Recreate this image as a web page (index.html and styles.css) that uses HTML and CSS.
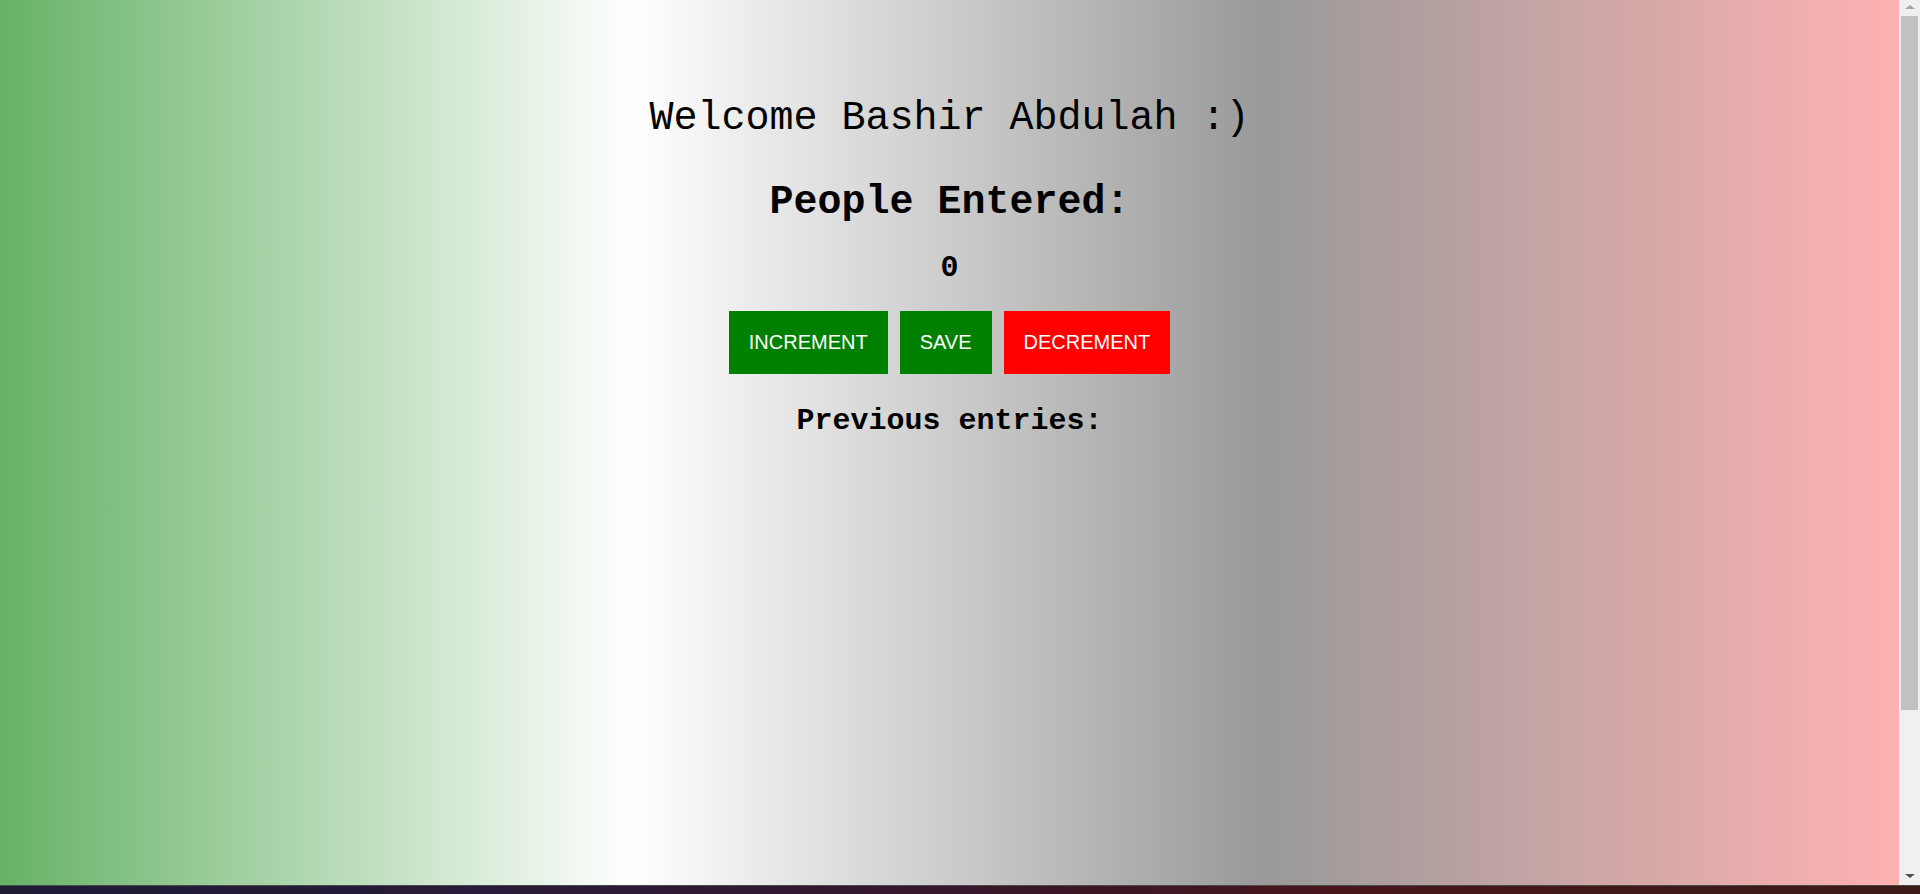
FILE: index.html
```html
<!DOCTYPE html>
<html lang="en">
<head>
<meta charset="utf-8">
<title>People Counter</title>
<link rel="stylesheet" href="styles.css">
</head>
<body>
<div class="screen">
  <div class="window">
    <main class="page">
      <h1 class="welcome">Welcome Bashir Abdulah :)</h1>
      <h2 class="heading">People Entered:</h2>
      <h2 class="count">0</h2>
      <div class="actions">
        <button class="btn btn-green">INCREMENT</button>
        <button class="btn btn-green">SAVE</button>
        <button class="btn btn-red">DECREMENT</button>
      </div>
      <p class="entries">Previous entries:</p>
    </main>
    <div class="scrollbar">
      <div class="arrow arrow-up"></div>
      <div class="thumb"></div>
      <div class="track-rest"></div>
      <div class="arrow arrow-down"></div>
    </div>
  </div>
  <div class="taskbar"></div>
</div>
</body>
</html>
```

FILE: styles.css
```css
html, body {
  margin: 0;
  padding: 0;
  height: 100%;
  overflow: hidden;
}

.screen {
  display: flex;
  flex-direction: column;
  height: 894px;
}

.window {
  flex: 1;
  display: flex;
  min-height: 0;
}

.page {
  flex: 1;
  display: flex;
  flex-direction: column;
  align-items: center;
  background: linear-gradient(to right, #66b266 0%, #ffffff 33.3%, #999999 66.6%, #ffb2b2 100%);
  font-family: "Liberation Mono", "Courier New", monospace;
  color: #000;
  padding-top: 96px;
}

.welcome {
  margin: 0;
  font-size: 40px;
  font-weight: normal;
  line-height: 46px;
}

.heading {
  margin: 38px 0 0;
  font-size: 40px;
  font-weight: bold;
  line-height: 46px;
}

.count {
  margin: 25px 0 0;
  font-size: 30px;
  font-weight: bold;
  line-height: 34px;
}

.actions {
  display: flex;
  gap: 12px;
  margin-top: 26px;
}

.btn {
  border: none;
  padding: 20px;
  font-family: "Liberation Sans", Arial, sans-serif;
  font-size: 20px;
  line-height: 23px;
  color: #fff;
}

.btn-green { background: #008000; }
.btn-red { background: #ff0000; }

.entries {
  margin: 30px 0 0;
  font-size: 30px;
  font-weight: bold;
  line-height: 34px;
}

.scrollbar {
  width: 21px;
  background: #f0f0f0;
  display: flex;
  flex-direction: column;
  align-items: center;
}

.arrow {
  width: 0;
  height: 0;
  border-left: 5px solid transparent;
  border-right: 5px solid transparent;
}

.arrow-up {
  margin-top: 5px;
  border-bottom: 4px solid #a3a3a3;
}

.thumb {
  margin-top: 7px;
  width: 17px;
  height: 694px;
  background: #c1c1c1;
}

.track-rest {
  flex: 1;
}

.arrow-down {
  margin-bottom: 7px;
  border-top: 4px solid #505050;
}

.taskbar {
  height: 8px;
  border-top: 1px solid #4a4a4a;
  background: linear-gradient(to right, #1f1c36 0%, #2a1a38 30%, #3a1626 55%, #47161b 70%, #3b1a17 100%);
}
```
